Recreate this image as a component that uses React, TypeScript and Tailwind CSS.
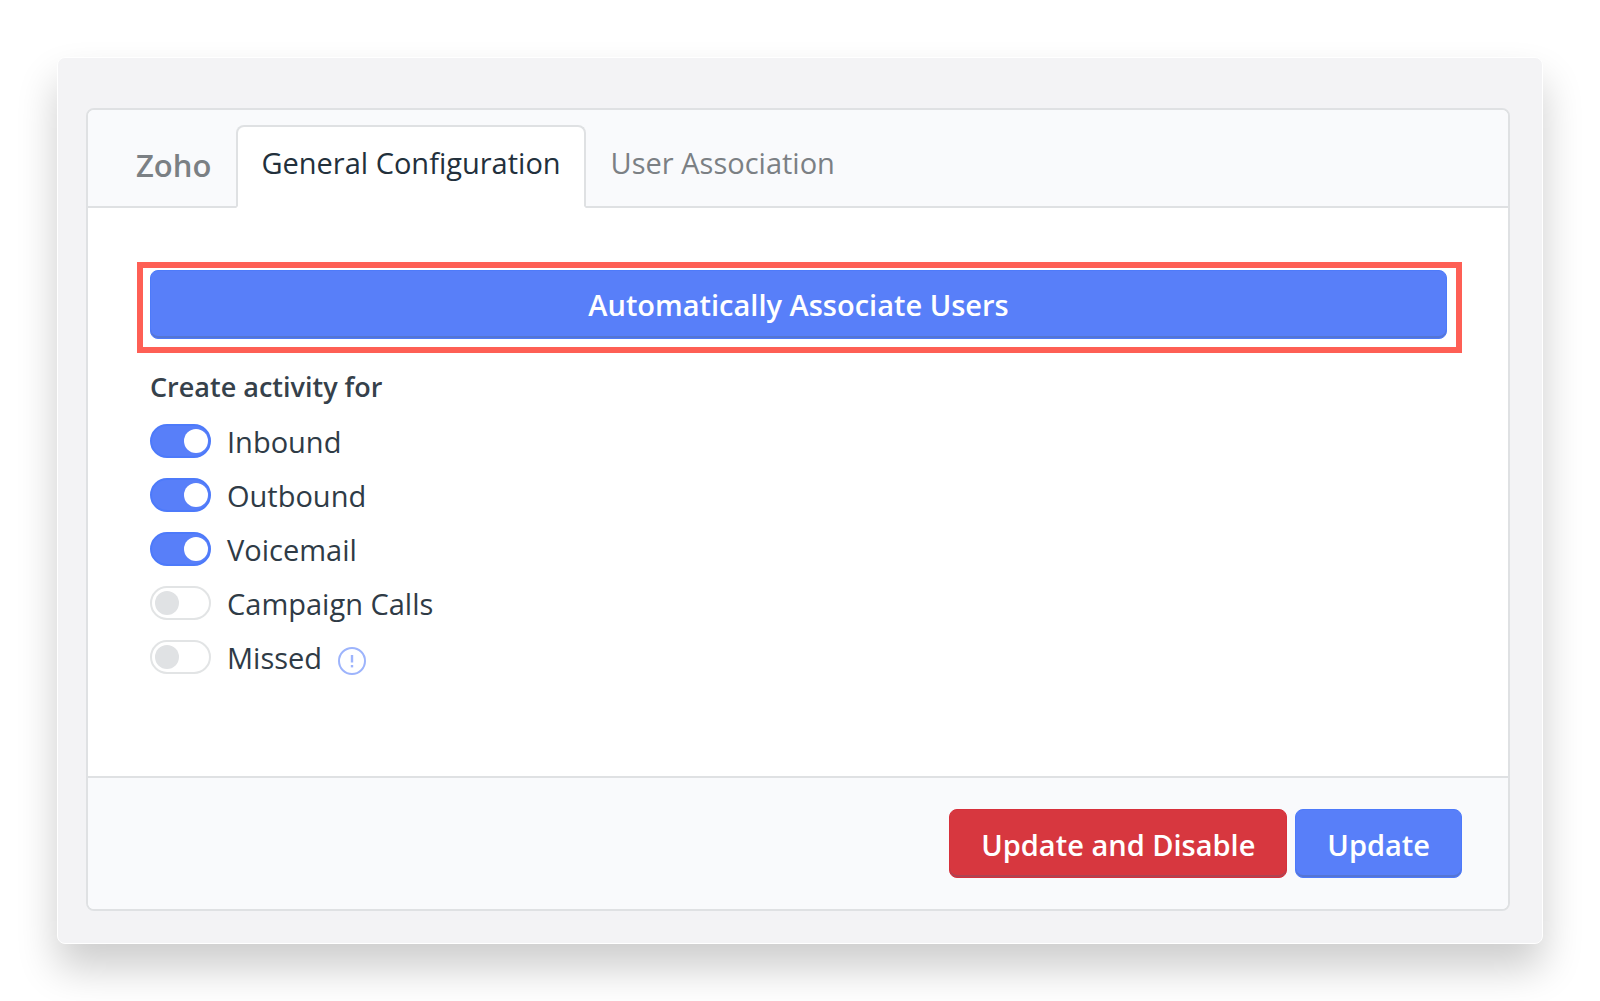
import { useState } from "react";
import type { ReactNode } from "react";
import clsx from "clsx";

const ACTIVITIES = [
  { id: "inbound", label: "Inbound", enabled: true },
  { id: "outbound", label: "Outbound", enabled: true },
  { id: "voicemail", label: "Voicemail", enabled: true },
  { id: "campaign", label: "Campaign Calls", enabled: false },
  { id: "missed", label: "Missed", enabled: false, info: true },
];

function InfoIcon() {
  return (
    <svg viewBox="0 0 28 28" className="mt-2 h-7 w-7" fill="none" stroke="#9db4fc" aria-hidden="true">
      <circle cx="14" cy="14" r="13" strokeWidth="2" />
      <path d="M14 8v7.5" strokeWidth="2.4" />
      <path d="M14 18v2.4" strokeWidth="2.4" />
    </svg>
  );
}

function Switch({ id, checked, onChange }: { id: string; checked: boolean; onChange: () => void }) {
  return (
    <span className="relative flex h-[34px] w-[61px] shrink-0">
      <input
        id={id}
        type="checkbox"
        role="switch"
        checked={checked}
        onChange={onChange}
        className="peer h-full w-full cursor-pointer appearance-none rounded-full border-2 border-[#e2e4e5] bg-white checked:border-[#4d7afa] checked:bg-[#587ff9]"
      />
      <span className="pointer-events-none absolute left-[5px] top-[5px] h-6 w-6 rounded-full bg-[#e0e2e4] peer-checked:left-[34px] peer-checked:bg-white" />
    </span>
  );
}

function Button({ className, children }: { className?: string; children: ReactNode }) {
  return (
    <button
      type="button"
      className={clsx(
        "h-[69px] rounded-lg border text-[29px] font-semibold text-white shadow-[inset_0_-2px_0_rgba(80,95,125,0.3)]",
        className
      )}
    >
      {children}
    </button>
  );
}

export default function App() {
  const [tab, setTab] = useState("general");
  const [enabled, setEnabled] = useState<Record<string, boolean>>(
    Object.fromEntries(ACTIVITIES.map((a) => [a.id, a.enabled]))
  );

  function toggle(id: string) {
    setEnabled((prev) => ({ ...prev, [id]: !prev[id] }));
  }

  const tabClass = (active: boolean) =>
    clsx(
      "h-[83px] rounded-t-lg border-2 px-[23px] pb-2 text-[29px]",
      active ? "border-[#dfe1e3] border-b-white bg-white text-[#22303c]" : "border-transparent text-[#7b8084]"
    );

  return (
    <div className="min-h-screen bg-white p-[57px] font-['Open_Sans',sans-serif] text-[#2f3b46]">
      <main className="rounded-lg border border-white bg-[#f3f3f5] pt-[50px] pr-8 pb-8 pl-7 shadow-[0_24px_40px_rgba(0,0,0,0.2)]">
        <section className="rounded-lg border-2 border-[#dfe1e3] bg-white">
          <header className="flex items-end rounded-t-md border-b-2 border-[#dfe1e3] bg-[#f9fafc] pt-[15px] pl-12">
            <h1 className="mr-[25px] self-center pb-0.5 text-[31px] leading-11 font-semibold text-[#7b8084]">Zoho</h1>
            <nav role="tablist" className="-mb-0.5 flex">
              <button type="button" role="tab" aria-selected={tab === "general"} onClick={() => setTab("general")} className={tabClass(tab === "general")}>
                General Configuration
              </button>
              <button type="button" role="tab" aria-selected={tab === "users"} onClick={() => setTab("users")} className={tabClass(tab === "users")}>
                User Association
              </button>
            </nav>
          </header>

          <div className="pt-[54px] pr-[46px] pb-[92px] pl-[49px]">
            <div className="border-[6px] border-[#fe5f55] pt-0.5 pr-[9px] pb-2 pl-[7px]">
              <Button className="w-full border-[#4d7afa] bg-[#587ff9]">Automatically Associate Users</Button>
            </div>

            <fieldset className="px-[13px] pt-4">
              <legend className="float-left w-full text-[27px] leading-9 font-semibold text-[#36414b]">Create activity for</legend>
              <ul className="clear-both flex flex-col pt-[9px]">
                {ACTIVITIES.map((a) => (
                  <li key={a.id} className="flex h-[54px] items-center">
                    <Switch id={a.id} checked={enabled[a.id]} onChange={() => toggle(a.id)} />
                    <label htmlFor={a.id} className="ml-4 pt-0.5 text-[29px]">
                      {a.label}
                    </label>
                    {a.info && (
                      <button type="button" aria-label="About missed calls" className="ml-4">
                        <InfoIcon />
                      </button>
                    )}
                  </li>
                ))}
              </ul>
            </fieldset>
          </div>

          <footer className="flex justify-end gap-2 rounded-b-md border-t-2 border-[#dfe1e3] bg-[#f9fafc] px-[46px] py-[31px]">
            <Button className="border-[#d7303b] bg-[#d7373f] px-[31px] pt-0.5">Update and Disable</Button>
            <Button className="border-[#4d7afa] bg-[#587ff9] px-[31px] pt-0.5">Update</Button>
          </footer>
        </section>
      </main>
    </div>
  );
}
